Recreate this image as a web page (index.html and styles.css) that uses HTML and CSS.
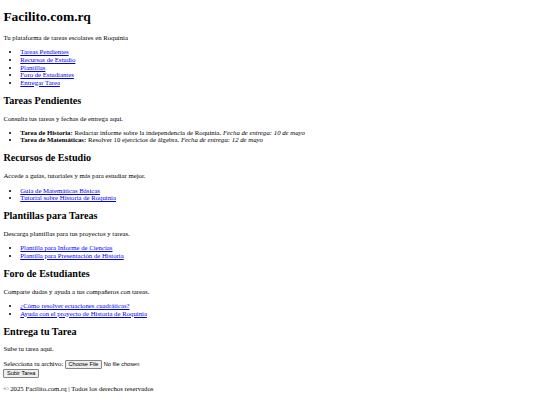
FILE: index.html
```html
<!DOCTYPE html>
<html lang="es">
<head>
<meta charset="utf-8">
<title>Facilito.com.rq</title>
<link rel="stylesheet" href="styles.css">
</head>
<body>
<header>
  <h1>Facilito.com.rq</h1>
  <p>Tu plataforma de tareas escolares en Roquinia</p>
  <nav>
    <ul>
      <li><a href="#tareas">Tareas Pendientes</a></li>
      <li><a href="#recursos">Recursos de Estudio</a></li>
      <li><a href="#plantillas">Plantillas</a></li>
      <li><a href="#foro">Foro de Estudiantes</a></li>
      <li><a href="#entregar">Entregar Tarea</a></li>
    </ul>
  </nav>
</header>
<main>
  <section id="tareas">
    <h2>Tareas Pendientes</h2>
    <p>Consulta tus tareas y fechas de entrega aquí.</p>
    <ul>
      <li><strong>Tarea de Historia:</strong> Redactar informe sobre la independencia de Roquinia. <em>Fecha de entrega: 10 de mayo</em></li>
      <li><strong>Tarea de Matemáticas:</strong> Resolver 10 ejercicios de álgebra. <em>Fecha de entrega: 12 de mayo</em></li>
    </ul>
  </section>
  <section id="recursos">
    <h2>Recursos de Estudio</h2>
    <p>Accede a guías, tutoriales y más para estudiar mejor.</p>
    <ul>
      <li><a href="#">Guía de Matemáticas Básicas</a></li>
      <li><a href="#">Tutorial sobre Historia de Roquinia</a></li>
    </ul>
  </section>
  <section id="plantillas">
    <h2>Plantillas para Tareas</h2>
    <p>Descarga plantillas para tus proyectos y tareas.</p>
    <ul>
      <li><a href="#">Plantilla para Informe de Ciencias</a></li>
      <li><a href="#">Plantilla para Presentación de Historia</a></li>
    </ul>
  </section>
  <section id="foro">
    <h2>Foro de Estudiantes</h2>
    <p>Comparte dudas y ayuda a tus compañeros con tareas.</p>
    <ul>
      <li><a href="#">¿Cómo resolver ecuaciones cuadráticas?</a></li>
      <li><a href="#">Ayuda con el proyecto de Historia de Roquinia</a></li>
    </ul>
  </section>
  <section id="entregar">
    <h2>Entrega tu Tarea</h2>
    <p>Sube tu tarea aquí.</p>
    <form>
      <label for="archivo">Selecciona tu archivo:</label>
      <input type="file" id="archivo" class="file">
      <br>
      <button type="button" class="btn">Subir Tarea</button>
    </form>
  </section>
</main>
<footer>
  <p>© 2025 Facilito.com.rq | Todos los derechos reservados</p>
</footer>
</body>
</html>
```
FILE: styles.css
```css
body {
  margin: 3.375px;
  font-family: "Liberation Serif", "Times New Roman", serif;
  font-size: 6.75px;
  line-height: 7.59px;
  color: #000;
  background: #fff;
}
h1 { font-size: 13.5px; line-height: 15.6px; margin: 6px 0 9.05px; }
h2 { font-size: 10.125px; line-height: 11.39px; margin: 8.4px 0; }
p { margin: 6.75px 0; }
ul { margin: 6.75px 0; padding-left: 16.875px; }
a { color: #0000ee; }
.file, .btn {
  font-family: "Liberation Sans", Arial, sans-serif;
  font-size: 5.625px;
  line-height: 6.33px;
  vertical-align: baseline;
}
.btn {
  padding: 0.42px 2.53px;
  border: 0.6px solid #858585;
  border-radius: 1px;
  background: #efefef;
  color: #000;
}
.file::file-selector-button {
  font-family: inherit;
  font-size: inherit;
  line-height: inherit;
  padding: 0.42px 2.53px;
  border: 0.6px solid #858585;
  border-radius: 1px;
  background: #efefef;
  color: #000;
  margin-right: 1.7px;
}
```
